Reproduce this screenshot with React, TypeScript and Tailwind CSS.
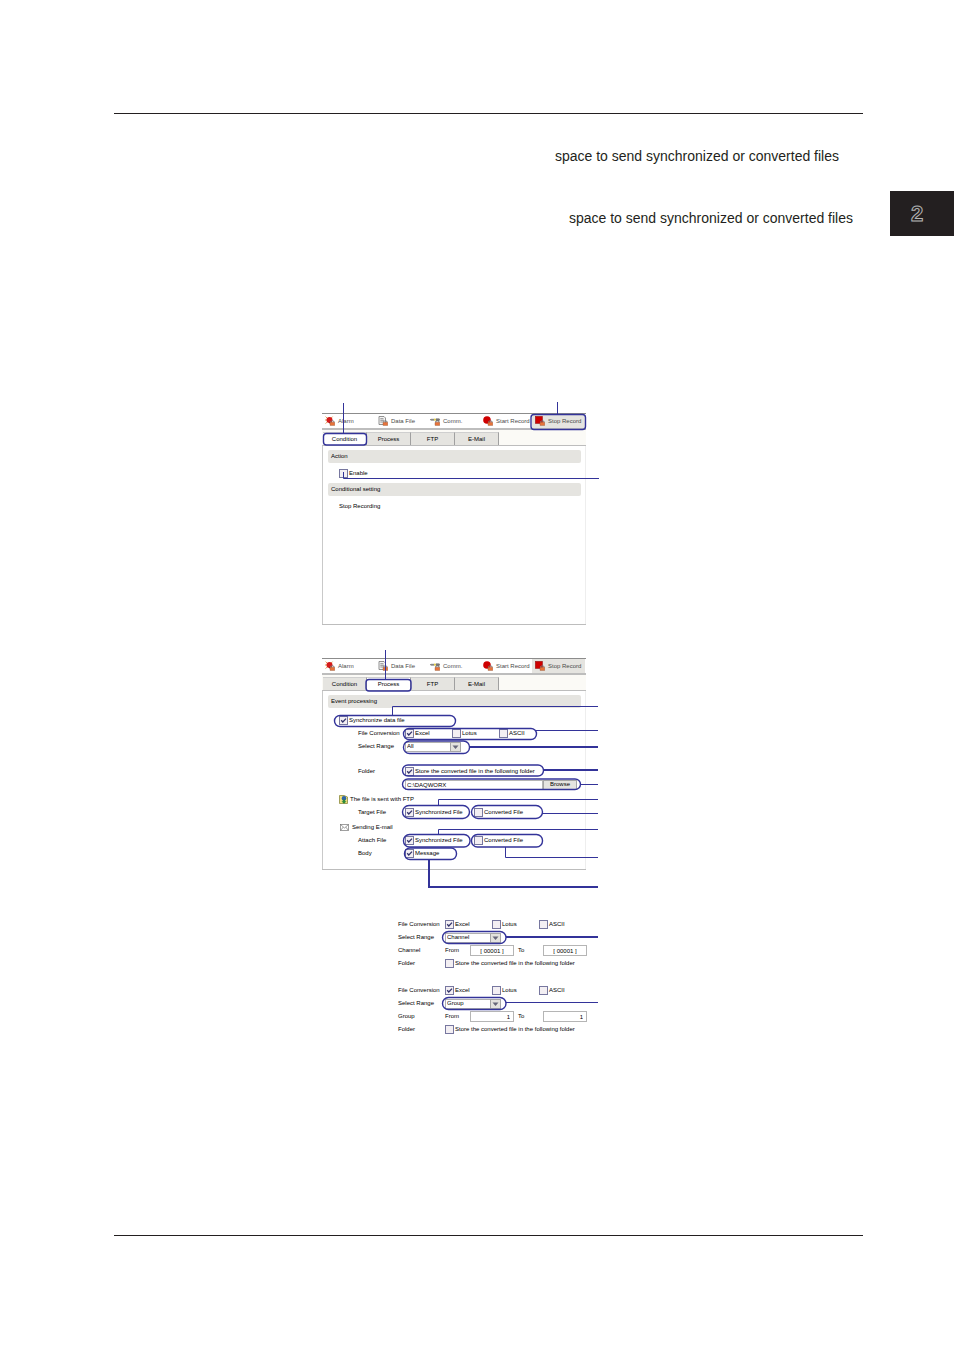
import type { ReactNode } from "react";

const Tick = () => (
  <svg
    viewBox="0 0 9 9"
    className="pointer-events-none col-start-1 row-start-1 size-[9px]"
    fill="none"
    stroke="#33336b"
    strokeWidth="1.3"
  >
    <path d="M2.2 4.2 L3.8 6 L7 2.6" />
  </svg>
);

const Check = ({ label, checked }: { label: string; checked?: boolean }) => (
  <label className="flex items-center gap-px whitespace-nowrap">
    <span className="grid shrink-0">
      <input
        type="checkbox"
        defaultChecked={checked}
        className="col-start-1 row-start-1 size-[9px] appearance-none border border-[#77779f] bg-[#f3eff3]"
      />
      {checked && <Tick />}
    </span>
    {label}
  </label>
);

const Select = ({ value, label }: { value: string; label: string }) => (
  <span className="relative flex w-[56px]">
    <select
      aria-label={label}
      defaultValue={value}
      className="h-[10px] w-full appearance-none border border-[#b0b0b0] bg-white px-px leading-[7px]"
    >
      <option>{value}</option>
    </select>
    <svg
      viewBox="0 0 11 10"
      className="pointer-events-none absolute right-0 top-0 h-[10px] w-[11px]"
    >
      <rect x=".5" y=".5" width="10" height="9" fill="#e3e2de" stroke="#a5a5a5" />
      <path d="M2.5 3.5 H8.5 L5.5 7 Z" fill="#66667a" />
    </svg>
  </span>
);

const Row = ({ label, children }: { label: string; children?: ReactNode }) => (
  <div className="flex h-[13px] items-center">
    <span className="w-[47px] shrink-0 whitespace-nowrap">{label}</span>
    {children}
  </div>
);

const Formats = () => (
  <div className="grid grid-cols-[47px_47px_47px]">
    <Check label="Excel" checked />
    <Check label="Lotus" />
    <Check label="ASCII" />
  </div>
);

const Lock = () => (
  <>
    <path d="M5.5 6.5 v-1 q2 -1.6 3.6 0 v1" fill="none" stroke="#777" strokeWidth=".9" />
    <rect x="5" y="6.3" width="4.8" height="3.3" rx=".5" fill="#e8733a" stroke="#8a5a40" strokeWidth=".4" />
  </>
);

const icons: Record<string, ReactNode> = {
  alarm: (
    <>
      <path d="M.6 .6 L7.6 7.6 M7.6 .6 L.6 7.6 M0 4 H3" stroke="#e2a052" strokeWidth="1" />
      <circle cx="4.5" cy="4" r="3" fill="#d61a1a" />
      <path d="M4 6.5 L7 8.5" stroke="#8a1010" strokeWidth="1" />
    </>
  ),
  data: (
    <>
      <path d="M1 .5 H6 L7.5 2 V8.5 H1 Z" fill="#f5f5f5" stroke="#777" strokeWidth=".8" />
      <path d="M2.3 2.7 H5.5 M2.3 4.3 H6 M2.3 6 H5" stroke="#777" strokeWidth=".8" />
    </>
  ),
  comm: (
    <>
      <path d="M0 3.7 H10" stroke="#777" strokeWidth="1" />
      <path d="M1 2.8 H4 V4.6 H1 Z" fill="#888" />
      <rect x="4" y="2.6" width="1.8" height="2" fill="#e8d24a" />
      <rect x="6" y="2.4" width="3.4" height="2.8" fill="#777" />
    </>
  ),
  start: <circle cx="4" cy="4" r="3.8" fill="#cf0000" />,
  stop: <rect x=".3" y=".3" width="7.2" height="7.2" fill="#cf0000" stroke="#8d1010" strokeWidth=".5" />,
};

const Tool = ({ icon, label }: { icon: string; label: string }) => (
  <button
    type="button"
    className="flex h-full items-center gap-[3px] pl-[3px] whitespace-nowrap text-[#4a4a4a]"
  >
    <svg viewBox="0 0 10 10" className="size-[10px] shrink-0">
      {icons[icon]}
      <Lock />
    </svg>
    {label}
  </button>
);

const Toolbar = () => (
  <div className="grid h-[17px] grid-cols-[53px_52px_53px_52px_53px] border-t border-b-2 border-t-[#8c8c8c] border-b-[#bdbdbd]">
    <Tool icon="alarm" label="Alarm" />
    <Tool icon="data" label="Data File" />
    <Tool icon="comm" label="Comm." />
    <Tool icon="start" label="Start Record" />
    <div className="bg-[#e5e4e0]">
      <Tool icon="stop" label="Stop Record" />
    </div>
  </div>
);

const Tabs = ({ active }: { active: string }) => (
  <div className="flex h-[16px] border-b border-[#bdbdbd] bg-[#fbfaf6] pt-[2px] pl-px">
    {["Condition", "Process", "FTP", "E-Mail"].map((tab) => (
      <button
        key={tab}
        type="button"
        className={
          tab === active
            ? "w-[44px] border-t border-r border-t-[#cfcfcf] border-r-[#a0a0a0] bg-white"
            : "w-[44px] border-t border-r border-t-[#cfcfcf] border-r-[#a0a0a0] bg-[#e5e4e0]"
        }
      >
        {tab}
      </button>
    ))}
  </div>
);

const Bar = ({ children }: { children: ReactNode }) => (
  <h2 className="mr-[4px] ml-[5px] h-[13px] rounded-[2px] bg-[#e5e4e0] pl-[3px] leading-[13px]">
    {children}
  </h2>
);

const Panel = ({ active, children }: { active: string; children: ReactNode }) => (
  <div className="h-[212px] w-[264px] border-b border-[#bdbdbd] bg-white">
    <Toolbar />
    <Tabs active={active} />
    <div className="h-[178px] border-x border-l-[#c9c9c9] border-r-[#eeeeee] pt-[4px]">
      {children}
    </div>
  </div>
);

type Ring = [x: number, y: number, w: number, h: number, r: number];
type Lead = [points: string, width: number];

// rings and leader lines drawn over a figure
const Callouts = ({ rings, leads }: { rings: Ring[]; leads: Lead[] }) => (
  <svg
    className="pointer-events-none absolute top-0 left-0 size-full overflow-visible"
    fill="none"
    stroke="#333399"
  >
    {rings.map(([x, y, w, h, r]) => (
      <rect key={`${x}-${y}`} x={x} y={y} width={w} height={h} rx={r} strokeWidth="1.4" />
    ))}
    {leads.map(([points, width]) => (
      <polyline key={points} points={points} strokeWidth={width} />
    ))}
  </svg>
);

const conditionRings: Ring[] = [
  [1.5, 32.5, 43, 11.5, 3],
  [209, 13.5, 54.5, 15, 3],
];

const conditionLeads: Lead[] = [
  ["21.5,2 21.5,32", 1],
  ["235.5,1 235.5,13", 1],
  ["21.5,71 21.5,77.5 277,77.5", 1],
];

const processRings: Ring[] = [
  [44, 29.5, 45, 11.5, 3],
  [12.5, 65.5, 121, 11, 5.5],
  [81.5, 78.5, 133, 11, 5.5],
  [81.5, 91, 66, 12.5, 6],
  [80.5, 115, 141, 11, 5.5],
  [80.5, 129, 178, 10.5, 5.5],
  [80.5, 155.5, 67, 13, 6.5],
  [149.5, 155.5, 71, 13, 6.5],
  [81.5, 184.5, 66.5, 12.5, 6],
  [149.5, 184.5, 71, 12.5, 6],
  [82.5, 198, 52, 11.5, 5.5],
];

const processLeads: Lead[] = [
  ["63.5,0 63.5,29", 1],
  ["70.5,65 70.5,56.5 276,56.5", 1],
  ["213,80.5 276,80.5", 1],
  ["147,97 276,97", 2],
  ["221,120 276,120", 2],
  ["259,134.5 276,134.5", 1],
  ["116.5,155 116.5,149.5 276,149.5", 1],
  ["220,163.5 276,163.5", 1],
  ["116.5,184 116.5,179.5 276,179.5", 1],
  ["183.5,197 183.5,207.5 276,207.5", 1],
  ["107,210 107,237 276,237", 2],
];

const Excerpt = ({
  range,
  from,
  align,
  lead,
}: {
  range: string;
  from: string;
  align: "center" | "right";
  lead: number;
}) => {
  const field =
    align === "center"
      ? "h-[11px] w-[44px] border border-[#b5b5b5] px-[3px] text-center leading-[8px]"
      : "h-[11px] w-[44px] border border-[#b5b5b5] px-[3px] text-right leading-[8px]";

  return (
    <div className="relative w-[200px]">
      <Row label="File Conversion">
        <Formats />
      </Row>
      <Row label="Select Range">
        <Select label="Select Range" value={range} />
      </Row>
      <Row label={range}>
        <label className="flex items-center">
          <span className="w-[25px]">From</span>
          <input defaultValue={from} className={field} />
        </label>
        <label className="flex items-center pl-[4px]">
          <span className="w-[25px]">To</span>
          <input defaultValue={from} className={field} />
        </label>
      </Row>
      <Row label="Folder">
        <Check label="Store the converted file in the following folder" />
      </Row>
      <Callouts
        rings={[[44.5, 13.5, 63.5, 12, 6]]}
        leads={[[lead === 2 ? "108,19 200,19" : "108,18.5 200,18.5", lead]]}
      />
    </div>
  );
};

const App = () => {
  return (
    <div className="relative flex min-h-screen flex-col bg-white font-['Liberation_Sans',sans-serif] text-[#231f20]">
      <header className="mr-[91px] ml-[114px] h-[114px] border-b border-[#231f20]" />

      <aside className="absolute top-[191px] right-0 flex h-[45px] w-[64px] items-center bg-[#231f20] pl-[21px] text-[22px] font-bold text-[#231f20] [-webkit-text-stroke:1px_#b5b5b5]">
        2
      </aside>

      <main className="mr-[91px] ml-[114px] flex flex-col pt-8">
        <p className="pr-6 text-right text-[14px] leading-5">
          space to send synchronized or converted files
        </p>
        <p className="mt-[42px] pr-[10px] text-right text-[14px] leading-5">
          space to send synchronized or converted files
        </p>

        <div className="mt-[173px] ml-[208px] text-[6px] leading-[9px] text-black">
          <section className="relative w-[278px] pt-[12px]">
            <Panel active="Condition">
              <Bar>Action</Bar>
              <div className="flex h-[20px] items-center pl-[16px]">
                <Check label="Enable" />
              </div>
              <Bar>Conditional setting</Bar>
              <p className="pt-[6px] pl-[16px]">Stop Recording</p>
            </Panel>
            <Callouts rings={conditionRings} leads={conditionLeads} />
          </section>

          <section className="relative mt-[25px] w-[278px] pt-[8px]">
            <Panel active="Process">
              <Bar>Event processing</Bar>
              <div className="mt-[6px] flex h-[13px] items-center pl-[16px]">
                <Check label="Synchronize data file" checked />
              </div>
              <div className="pl-[35px]">
                <Row label="File Conversion">
                  <Formats />
                </Row>
                <Row label="Select Range">
                  <Select label="Select Range" value="All" />
                </Row>
              </div>
              <div className="pt-[12px] pl-[35px]">
                <Row label="Folder">
                  <Check label="Store the converted file in the following folder" checked />
                </Row>
                <Row label="">
                  <input
                    aria-label="Folder path"
                    defaultValue="C:\DAQWORX"
                    className="h-[10px] w-[138px] border border-[#b5b5b5] px-px leading-[7px]"
                  />
                  <button
                    type="button"
                    className="h-[10px] w-[34px] border border-[#a5a5a5] bg-[#e5e4e0] leading-[7px]"
                  >
                    Browse
                  </button>
                </Row>
              </div>
              <div className="mt-[2px] flex h-[13px] items-center gap-[2px] pl-[16px]">
                <svg viewBox="0 0 9 9" className="size-[9px]">
                  <path d="M.5 .5 H5 L8.5 2 V8.5 H.5 Z" fill="#f2e07a" stroke="#8a8a40" strokeWidth=".8" />
                  <circle cx="5" cy="3.4" r="2.3" fill="#2d64a8" />
                  <path d="M4 4.6 H6 V6.2 H7.6 L5 8.8 L2.4 6.2 H4 Z" fill="#2b8a3a" />
                </svg>
                The file is sent with FTP
              </div>
              <div className="pl-[35px]">
                <Row label="Target File">
                  <div className="grid grid-cols-[69px_69px]">
                    <Check label="Synchronized File" checked />
                    <Check label="Converted File" />
                  </div>
                </Row>
              </div>
              <div className="mt-[2px] flex h-[13px] items-center gap-[3px] pl-[17px]">
                <svg viewBox="0 0 9 7" className="h-[7px] w-[9px]" fill="none" stroke="#777" strokeWidth=".7">
                  <rect x=".5" y=".5" width="8" height="6" />
                  <path d="M.5 .5 L4.5 4 L8.5 .5 M.5 6.5 L3.3 3 M8.5 6.5 L5.7 3" />
                </svg>
                Sending E-mail
              </div>
              <div className="pl-[35px]">
                <Row label="Attach File">
                  <div className="grid grid-cols-[69px_69px]">
                    <Check label="Synchronized File" checked />
                    <Check label="Converted File" />
                  </div>
                </Row>
                <Row label="Body">
                  <Check label="Message" checked />
                </Row>
              </div>
            </Panel>
            <Callouts rings={processRings} leads={processLeads} />
          </section>

          <div className="mt-[48px] ml-[76px] flex flex-col gap-[14px]">
            <Excerpt range="Channel" from="[ 00001 ]" align="center" lead={2} />
            <Excerpt range="Group" from="1" align="right" lead={1} />
          </div>
        </div>
      </main>

      <footer className="mt-auto mr-[91px] ml-[114px] h-[115px] border-t border-[#231f20]" />
    </div>
  );
};

export default App;
